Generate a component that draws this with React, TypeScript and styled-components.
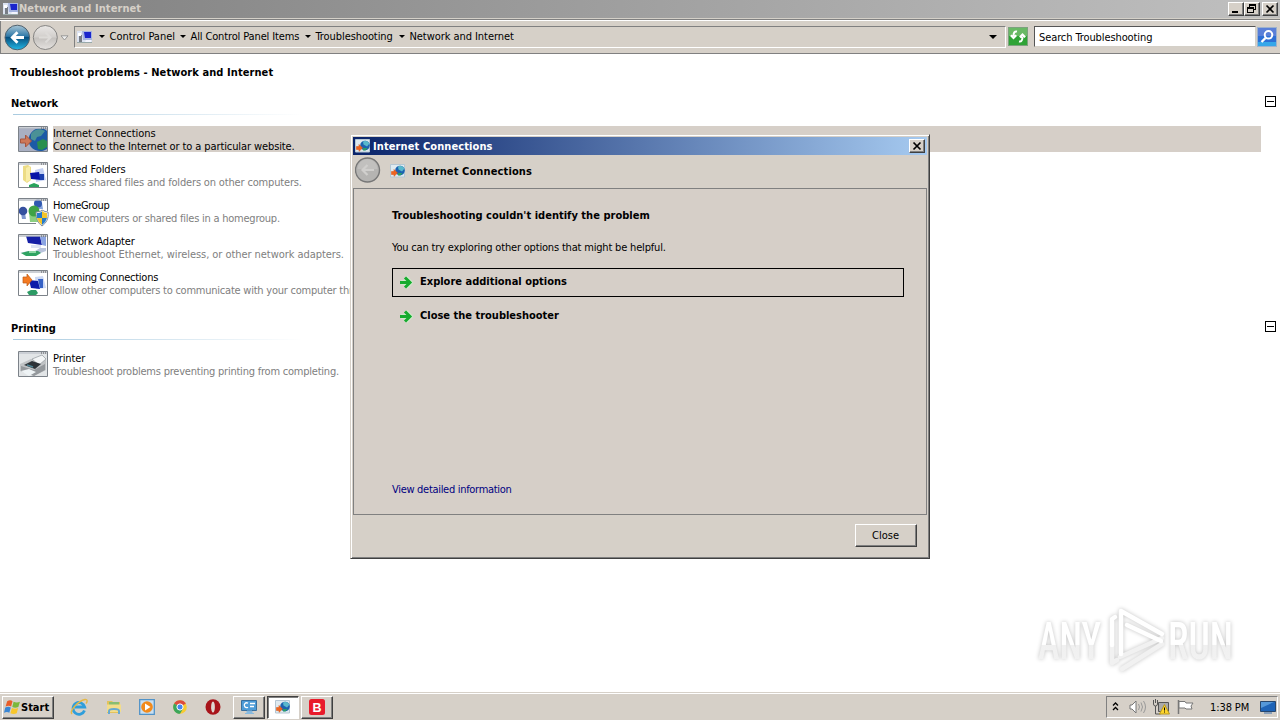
import { ReactNode } from "react";
import styled, { createGlobalStyle, css } from "styled-components";

type IconKind = "globe" | "folders" | "homegroup" | "adapter" | "incoming" | "printer";

const networkItems: { icon: IconKind; title: string; text: string; ts: number; ds: number }[] = [
  { icon: "globe", title: "Internet Connections", text: "Connect to the Internet or to a particular website.", ts: -0.05, ds: -0.1 },
  { icon: "folders", title: "Shared Folders", text: "Access shared files and folders on other computers.", ts: -0.07, ds: -0.16 },
  { icon: "homegroup", title: "HomeGroup", text: "View computers or shared files in a homegroup.", ts: -0.33, ds: -0.23 },
  { icon: "adapter", title: "Network Adapter", text: "Troubleshoot Ethernet, wireless, or other network adapters.", ts: -0.13, ds: -0.06 },
  { icon: "incoming", title: "Incoming Connections", text: "Allow other computers to communicate with your computer through", ts: -0.24, ds: -0.23 },
];

function App() {
  return (
    <Desktop>
      <GlobalStyle />
      <TitleBar>
        <ComputerIcon />
        <WindowTitle>Network and Internet</WindowTitle>
        <WindowButton>
          <svg width="14" height="12"><path d="M3 9h6" stroke="#000" strokeWidth="2" /></svg>
        </WindowButton>
        <WindowButton>
          <svg width="14" height="12" fill="none" stroke="#000" shapeRendering="crispEdges">
            <path d="M4.500 4V1.500h6v5H9M4 2.500h7M2.500 4.500h6v5h-6zM2 5.500h7" />
          </svg>
        </WindowButton>
        <WindowButton $gap>
          <CloseCross />
        </WindowButton>
      </TitleBar>
      <Toolbar>
        <BackIcon />
        <ForwardIcon />
        <HistoryArrow width="9" height="6"><path d="M1 .8h7L4.500 5z" fill="#eee" stroke="#888" strokeWidth=".8" /></HistoryArrow>
        <AddressBar>
          <ComputerIcon />
          <Crumb $w={81}>Control Panel</Crumb>
          <Crumb $w={125} $ls={-0.13}>All Control Panel Items</Crumb>
          <Crumb $w={94} $ls={-0.08}>Troubleshooting</Crumb>
          <Crumb $w={121} $ls={-0.06}>Network and Internet</Crumb>
          <AddressDrop />
        </AddressBar>
        <RefreshIcon />
        <SearchBox>Search Troubleshooting</SearchBox>
        <SearchIcon />
      </Toolbar>
      <Content>
        <PageTitle>Troubleshoot problems - Network and Internet</PageTitle>
        <Section>
          <SectionHead>
            Network
            <Collapse />
          </SectionHead>
          <Rule />
          {networkItems.map((item, i) => (
            <Row key={item.icon}>
              <ItemIcon kind={item.icon} />
              <RowText $active={i === 0}>
                <RowTitle $ls={item.ts}>{item.title}</RowTitle>
                <RowDesc $active={i === 0} $ls={item.ds}>{item.text}</RowDesc>
              </RowText>
            </Row>
          ))}
        </Section>
        <Section $second>
          <SectionHead>
            Printing
            <Collapse />
          </SectionHead>
          <Rule />
          <Row>
            <ItemIcon kind="printer" />
            <RowText>
              <RowTitle $ls={-0.1}>Printer</RowTitle>
              <RowDesc $ls={-0.22}>Troubleshoot problems preventing printing from completing.</RowDesc>
            </RowText>
          </Row>
        </Section>
      </Content>
      <Watermark />
      <Dialog>
        <DialogTitle>
          <GlobeIcon />
          <DialogName>Internet Connections</DialogName>
          <WindowButton>
            <CloseCross />
          </WindowButton>
        </DialogTitle>
        <DialogNav>
          <DisabledBack />
          <GlobeIcon />
          <NavName>Internet Connections</NavName>
        </DialogNav>
        <DialogBody>
          <DialogHeading>Troubleshooting couldn't identify the problem</DialogHeading>
          <DialogText>You can try exploring other options that might be helpful.</DialogText>
          <Command $focused><GreenArrow /><span>Explore additional options</span></Command>
          <Command><GreenArrow /><span>Close the troubleshooter</span></Command>
          <DetailLink>View detailed information</DetailLink>
        </DialogBody>
        <DialogFooter>
          <CloseButton>Close</CloseButton>
        </DialogFooter>
      </Dialog>
      <Taskbar>
        <StartButton>
          <WindowsLogo />
          <span>Start</span>
        </StartButton>
        <QuickLaunch>
          <IeIcon />
          <ExplorerIcon />
          <MediaIcon />
          <ChromeIcon />
          <OperaIcon />
        </QuickLaunch>
        <TaskButton><ControlPanelIcon /></TaskButton>
        <TaskButton $active><GlobeIcon /></TaskButton>
        <TaskButton><BIcon /></TaskButton>
        <Tray>
          <TrayIcons />
          <Clock>1:38 PM</Clock>
          <MonitorIcon />
        </Tray>
      </Taskbar>
    </Desktop>
  );
}

export default App;

// icons

const CloseCross = () => (
  <svg width="14" height="12"><path d="M3.500 2.500l7 7m0-7l-7 7" stroke="#000" strokeWidth="1.700" /></svg>
);

const ComputerIcon = () => (
  <svg width="16" height="14">
    <path d="M0 1h15v12H0z" fill="#dce3f2" />
    <path d="M5 1h10v9H6z" fill="#a5b3e0" />
    <path d="M7 2h7v6H8z" fill="#1a24cc" />
    <path d="M9 10h5v2H8z" fill="#f4f5ff" />
    <path d="M2 5h3v7H2z" fill="#777c86" />
    <path d="M1 3h3v3H1z" fill="#fff" />
    <path d="M0 12.500h15" stroke="#9aa" />
  </svg>
);

const BackIcon = () => (
  <svg width="29" height="30" viewBox="0 0 29 30">
    <defs>
      <linearGradient id="back" x2="0" y2="1">
        <stop stopColor="#a9c6d6" /><stop offset=".45" stopColor="#2f79a8" />
        <stop offset=".5" stopColor="#075080" /><stop offset="1" stopColor="#22b8e6" />
      </linearGradient>
    </defs>
    <circle cx="14.300" cy="15.500" r="12.300" fill="url(#back)" stroke="#51616d" />
    <path d="M21 15.500H10M14.500 10.300l-5.200 5.200 5.200 5.200" fill="none" stroke="#fff" strokeWidth="2.800" />
  </svg>
);

const ForwardIcon = () => (
  <svg width="26" height="30" viewBox="0 0 26 30">
    <defs>
      <linearGradient id="fwd" x2="0" y2="1">
        <stop stopColor="#e9e7e5" /><stop offset=".48" stopColor="#d2cfcc" />
        <stop offset=".52" stopColor="#c4c1be" /><stop offset="1" stopColor="#e5e2df" />
      </linearGradient>
    </defs>
    <circle cx="13.300" cy="15.500" r="12" fill="url(#fwd)" stroke="#858482" />
    <path d="M7 15.500h11M13.500 10.500l5 5-5 5" fill="none" stroke="#dddbd8" strokeWidth="2" />
  </svg>
);

const DisabledBack = () => (
  <svg width="26" height="26" viewBox="0 0 26 26">
    <circle cx="12.500" cy="13" r="12" fill="#b5b4b2" stroke="#777" strokeWidth="1.400" />
    <path d="M2.500 12a10 10 0 0 1 20 0z" fill="#c1c0be" />
    <path d="M19 13H8M12.500 8l-5 5 5 5" fill="none" stroke="#d0cfcd" strokeWidth="2.200" />
  </svg>
);

const RefreshIcon = () => (
  <svg width="20" height="19" viewBox="0 0 20 19">
    <rect x=".5" y=".5" width="19" height="18" fill="#2fa336" stroke="#7ca27e" />
    <path d="M1 1h18v8H1z" fill="#69b965" />
    <path d="M9 4.500C6.500 4 5.500 6 5.500 9M2.800 8.300L5.500 11l2.800-2.700M11 14.500c2.500.5 3.500-1.500 3.500-5M11.800 10.200l2.700-2.700 2.700 2.700" fill="none" stroke="#fff" strokeWidth="2" />
  </svg>
);

const SearchIcon = () => (
  <svg width="20" height="20" viewBox="0 0 20 20">
    <rect x=".5" y=".5" width="19" height="19" fill="#2d6fd5" stroke="#9db2cd" />
    <path d="M1 1h18v8H1z" fill="#5a7fd8" />
    <path d="M1 15h18v4H1z" fill="#36a7e9" />
    <circle cx="11.500" cy="7.800" r="3.800" fill="none" stroke="#fff" strokeWidth="2" />
    <path d="M8.500 11l-4 4" stroke="#fff" strokeWidth="2.400" />
  </svg>
);

const GlobeIcon = () => (
  <svg width="16" height="14" viewBox="0 0 16 14">
    <path d="M.5.500h14v12.500H.5z" fill="#dfeaf0" stroke="#b4c6d3" />
    <circle cx="10" cy="6.500" r="4.800" fill="#1c62b0" />
    <path d="M8 2.500q4-2 6.500 2L12 7.500 8.500 5.500z" fill="#59b8cc" />
    <path d="M8 9l4.500 0-2 2.500H8z" fill="#2b9c6b" />
    <path d="M1.500 7.500H4V5.500l3.500 3.500-3.500 3.300V10.500H1.500z" fill="#ee6420" stroke="#dd5a1c" strokeWidth=".6" />
  </svg>
);

const GreenArrow = () => (
  <svg width="15" height="16" viewBox="0 0 15 16">
    <path d="M2 7.500h9M6.500 2.500l5 5-5 5" fill="none" stroke="#cdeecb" strokeWidth="4.500" strokeLinejoin="round" />
    <path d="M1 7.500H11M6 2.500l5 5-5 5" fill="none" stroke="#16ab2e" strokeWidth="3" />
  </svg>
);

const drawings: Record<IconKind, ReactNode> = {
  globe: (
    <>
      <path d="M1 3h28v24H1z" fill="#a9afc2" />
      <path d="M29 6v18c-4 3-12 3-16-2-4-5-3-13 3-17 4-2 10-2 13 1z" fill="#1c5aa6" />
      <path d="M13 9c3-5 9-6 14-3l-4 5-4 1-2 4-4-2z" fill="#4a9196" />
      <path d="M19 17l6-3 4 2v6l-5 3-4-1z" fill="#2a8f4e" />
      <path d="M2.500 14h5v-4l6 6-6 6v-4h-5z" fill="#cd7758" stroke="#a6543e" />
    </>
  ),
  folders: (
    <>
      <path d="M5 5l5-1 3 2v13l-4 3-4-3z" fill="#ecdc86" />
      <path d="M8 7l4-2v14l-4 2z" fill="#f8eda9" />
      <path d="M17 9l8-2 3 12-10 2z" fill="#c3d0f3" />
      <path d="M12 12l9-1 2 8-10-1z" fill="#0714a8" />
      <path d="M21 13h5v6h-4z" fill="#1c3fae" />
      <path d="M11 24l5-2 5 2v3H11z" fill="#28a35d" />
    </>
  ),
  homegroup: (
    <>
      <path d="M3 16h4l1 6H4z" fill="#7f97cf" />
      <circle cx="5" cy="14" r="4.300" fill="#35509f" />
      <path d="M17 6h7l1 6h-7z" fill="#88a5dc" />
      <circle cx="20" cy="6.500" r="4" fill="#3059b0" />
      <path d="M11 15h10l1 10H12z" fill="#8acf80" />
      <circle cx="16" cy="14" r="5.500" fill="#3fa345" />
      <path d="M18 15q5 0 6-2 3 2 6 2c1 7-2 11-6 14-4-3-6-7-6-14z" fill="#fff" stroke="#7e8a99" />
      <path d="M19 16q4 0 5-2v7h-5zM24 21h5q-1 4-5 7z" fill="#277bc9" />
      <path d="M24 14q2 2 5 2v5h-5zM19 21h5v7q-4-3-5-7z" fill="#f4c52a" />
    </>
  ),
  adapter: (
    <>
      <path d="M8 3h14l2 9-14-2z" fill="#151fa6" />
      <path d="M22 3h6v10l-4-1z" fill="#8aa4e2" />
      <path d="M13 12h10v3H13z" fill="#dce3f2" />
      <path d="M2 20l8-2h7l5-3h6v3l-8 3H9z" fill="#b9c4dc" />
      <path d="M3 20l8-2h9l3 2-5 3H8z" fill="#2fa362" />
      <path d="M11 18h7v2h-7z" fill="#8ed6a6" />
    </>
  ),
  incoming: (
    <>
      <path d="M17 8l8-1 3 12-10 1z" fill="#cbd8f3" />
      <path d="M11 11l9 1 2 8-9-1z" fill="#0c1ba9" />
      <path d="M20 10h5v9h-3z" fill="#3461c6" />
      <path d="M5 8h4V5l5 6-5 6v-3H5z" fill="#f47a21" stroke="#bd5a16" strokeWidth=".7" />
      <path d="M9 23l4-2h5l2 3-2 2h-7z" fill="#2d9b65" />
    </>
  ),
  printer: (
    <>
      <path d="M1 4h28v23H1z" fill="#e2e5e7" />
      <path d="M2 14l11-5 15 1v10l-12 6-14-5z" fill="#c0c3c5" />
      <path d="M14 9l10-4 4 4-7 6z" fill="#f3f5f6" stroke="#92989d" strokeWidth=".7" />
      <path d="M6 15l8-4 9 3-6 5z" fill="#2e3338" />
      <path d="M3 16l13 4 11-6v6l-11 6-13-5z" fill="#94989c" />
      <path d="M3 21l8-2 7 3-7 4z" fill="#eef3f5" />
      <path d="M9 15l6 2" stroke="#4f8494" strokeWidth="1.500" />
    </>
  ),
};

const ItemIcon = ({ kind }: { kind: IconKind }) => (
  <svg width="31" height="30" viewBox="0 0 31 30">
    <path d="M.5 1.500h29v25H.5z" fill="#fff" />
    {drawings[kind]}
    <path d="M1 2h28v2H1z" fill="#b5bac3" opacity=".7" />
    <path d="M23 3h1m1 0h1m1 0h1" stroke="#555" />
    <path
      d={kind === "homegroup" ? "M18 26.500H.5v-25h29V14" : "M.5 1.500h29v25H.5z"}
      fill="none"
      stroke="#7c8289"
    />
  </svg>
);

const Collapse = () => (
  <CollapseBox width="11" height="11" shapeRendering="crispEdges">
    <path d="M.5.500h10v10H.5zM2 5.500h7" fill="none" stroke="#000" />
  </CollapseBox>
);

const WindowsLogo = () => (
  <svg width="17" height="17" viewBox="0 0 16 16">
    <path d="M3 2q3-1.500 5 0L6.700 7Q4.500 5.600 1.500 7z" fill="#e95d29" />
    <path d="M9 2.500q3 1.500 6 0L13.500 7.500q-3 1.300-5.700 0z" fill="#7bb83b" />
    <path d="M1.200 8q3-1.400 5.200 0L5 13Q3 11.500 0 13z" fill="#3a86d4" />
    <path d="M7.500 8.500q3 1.400 5.800 0L12 13.500q-3 1.300-6 0z" fill="#f8c62b" />
  </svg>
);

const IeIcon = () => (
  <svg width="18" height="18" viewBox="0 0 18 18">
    <path d="M14.500 12.500A5.900 5.900 0 1 1 14.700 9H5" fill="none" stroke="#2f9edb" strokeWidth="2.800" />
    <path d="M2 16C-1 13 8 3 15 1.500c3-.4 2.300 2.500 1 4" fill="none" stroke="#e5b845" strokeWidth="1.400" />
  </svg>
);

const ExplorerIcon = () => (
  <svg width="16" height="16" viewBox="0 0 16 16">
    <path d="M1 2h5l1 1h7v11H1z" fill="#e3c25c" />
    <path d="M3 3h10v3H3z" fill="#88bd71" />
    <path d="M1 5.500h14V13H1z" fill="#f3dd8a" />
    <path d="M3 15v-3q0-2 5-2t5 2v3" fill="none" stroke="#66a9d1" strokeWidth="2" />
  </svg>
);

const MediaIcon = () => (
  <svg width="16" height="16" viewBox="0 0 16 16">
    <path d="M.7.700h14.600v14.600H.7z" fill="#c9dff1" stroke="#5193c8" strokeWidth="1.300" />
    <circle cx="8" cy="8" r="5.800" fill="#f28a1b" />
    <path d="M6 4.500L11.500 8 6 11.500z" fill="#fff" />
  </svg>
);

const ChromeIcon = () => (
  <svg width="14" height="14" viewBox="0 0 14 14">
    <circle cx="7" cy="7" r="6.800" fill="#f8cb31" />
    <path d="M7 7L1.100 3.600A6.800 6.800 0 0 1 12.900 3.600z" fill="#dc4b3e" />
    <path d="M7 7L1.100 3.600A6.800 6.800 0 0 0 7 13.800l3-5z" fill="#3ca65b" />
    <circle cx="7" cy="7" r="3.100" fill="#4587ef" stroke="#fff" />
  </svg>
);

const OperaIcon = () => (
  <svg width="16" height="16" viewBox="0 0 16 16">
    <ellipse cx="8" cy="8" rx="7.500" ry="7.700" fill="#a8141a" />
    <ellipse cx="8" cy="8" rx="1.900" ry="5.600" fill="#ded6d0" />
  </svg>
);

const ControlPanelIcon = () => (
  <svg width="16" height="16" viewBox="0 0 16 16">
    <path d="M.5 1.500h15v10H.5z" fill="#4d9bd7" stroke="#386f9e" />
    <path d="M7 4.200a2.400 2.400 0 1 0 0 4M9 4.500h5M9 7.500h4" fill="none" stroke="#fff" strokeWidth="1.300" />
    <path d="M6 12h5v2H6zM4 14.500h9" fill="#87b9df" stroke="#87b9df" />
  </svg>
);

const BIcon = () => (
  <svg width="16" height="16" viewBox="0 0 16 16">
    <rect width="16" height="16" rx="2.500" fill="#e91b2b" />
    <text x="8" y="12.500" fontSize="12.500" fontWeight="700" fontFamily="Liberation Sans, sans-serif" textAnchor="middle" fill="#fff">B</text>
  </svg>
);

const TrayIcons = () => (
  <svg width="92" height="18" viewBox="0 0 92 18" fill="none">
    <path d="M5 7.500L7.500 5 10 7.500M5 12l2.500-2.500L10 12" stroke="#000" strokeWidth="1.300" />
    <path d="M22 7h2l4-4v12l-4-4h-2z" fill="#fff" stroke="#777" />
    <path d="M30.500 6q2 3 0 6M33 4.500q3 4.500 0 9M35.500 3q4 6 0 12" stroke="#999" />
    <path d="M50.500 4.500h10v9h-10z" fill="#aaa" stroke="#555" />
    <path d="M45.500 2v4q0 2 2 2t2-2V2M47.500 1v4M47.500 8v8h5" stroke="#555" />
    <path d="M56.500 6.500l5 9.500h-10z" fill="#ffd52b" stroke="#b89820" />
    <path d="M56.500 9.500v3m0 1v1" stroke="#000" />
    <path d="M70.500 2v14" stroke="#777" strokeWidth="1.500" />
    <path d="M71 3.500h6l1 1.500h7l-2 3 1 3h-6l-1-1h-6z" fill="#fff" stroke="#777" />
  </svg>
);

const MonitorIcon = () => (
  <svg width="16" height="16" viewBox="0 0 16 16">
    <path d="M.5 2.500h15v10H.5z" fill="#1f64b7" stroke="#28476d" />
    <path d="M1 3h13L1 9z" fill="#5598d9" />
    <path d="M4 14h8" stroke="#6f8fb4" strokeWidth="1.500" />
  </svg>
);

const Watermark = () => (
  <WatermarkSvg width="210" height="76" viewBox="0 0 210 76">
    <defs>
      <linearGradient id="mark" x2="0" y2="1">
        <stop stopColor="#fff" /><stop offset=".55" stopColor="#fff" />
        <stop offset=".56" stopColor="#f0f0f0" /><stop offset="1" stopColor="#f3f3f3" />
      </linearGradient>
    </defs>
    <g fill="url(#mark)" fontFamily="Roboto, sans-serif" fontSize="51" fontWeight="500">
      <text x="8" y="55" textLength="63" lengthAdjust="spacingAndGlyphs">ANY</text>
      <text x="138" y="55" textLength="65" lengthAdjust="spacingAndGlyphs">RUN</text>
    </g>
    <g fill="none" strokeWidth="4.500" strokeLinejoin="round" strokeLinecap="round">
      <path d="M90 53l42-19M82 40v19l5-3M92 65l40-25" stroke="#f1f1f1" />
      <path d="M91 50V7l41 23M82 41V15l3-2M97 21l34 16" stroke="#fff" />
    </g>
  </WatermarkSvg>
);

// styles

const GlobalStyle = createGlobalStyle`
  body {
    margin: 0;
    overflow: hidden;
    font-family: "DejaVu Sans Condensed", "DejaVu Sans", sans-serif;
    font-stretch: condensed;
    font-size: 11px;
    line-height: 13px;
    color: #000;
  }

  * {
    box-sizing: border-box;
  }

  svg {
    display: block;
    flex-shrink: 0;
  }
`;

const raised = css`
  background: #d6d0c8;
  border: 1px solid;
  border-color: #fff #404040 #404040 #fff;
  box-shadow: inset -1px -1px #808080;
`;

const Desktop = styled.div`
  position: relative;
  width: 1280px;
  height: 720px;
  display: flex;
  flex-direction: column;
  overflow: hidden;
  background: #fff;
  white-space: nowrap;
`;

const TitleBar = styled.div`
  height: 19px;
  display: flex;
  align-items: center;
  padding: 0 2px 1px 3px;
  background: linear-gradient(90deg, #808080, #c0c0c0);
  border-bottom: 1px solid #d4d0c8;
`;

const WindowTitle = styled.div`
  flex: 1;
  font-weight: 700;
  letter-spacing: 0.09px;
  color: #d6d0c8;
`;

const WindowButton = styled.button<{ $gap?: boolean }>`
  ${raised}
  width: 16px;
  height: 14px;
  display: flex;
  align-items: center;
  justify-content: center;
  padding: 0;
  overflow: hidden;
  margin-left: ${(p) => (p.$gap ? 2 : 0)}px;
`;

const Toolbar = styled.div`
  height: 35px;
  display: flex;
  align-items: center;
  padding: 0 3px;
  background: #d6d0c8;
  border-top: 1px solid #808080;
  border-bottom: 1px solid #808080;
  box-shadow: inset 0 1px #fff, inset 1px 0 #808080;
`;

const HistoryArrow = styled.svg`
  margin: 2px 0 0 2px;
`;

const AddressBar = styled.div`
  width: 932px;
  height: 22px;
  margin: 0 2px 0 5px;
  display: flex;
  align-items: center;
  padding-left: 2px;
  border: 1px solid;
  border-color: #808080 #fff #fff #808080;

  > svg {
    margin-right: 5.5px;
  }
`;

const Crumb = styled.div<{ $w: number; $ls?: number }>`
  display: flex;
  align-items: center;
  width: ${(p) => p.$w}px;
  letter-spacing: ${(p) => p.$ls || 0}px;

  &::before {
    content: "";
    flex-shrink: 0;
    border: 3px solid transparent;
    border-top-color: #000;
    border-bottom: 0;
    margin-right: 5px;
  }
`;

const AddressDrop = styled.div`
  margin: 1px 8px 0 auto;
  border: 4px solid transparent;
  border-top-color: #000;
  border-bottom: 0;
`;

const SearchBox = styled.div`
  flex: 1;
  height: 21px;
  margin: 0 1px 0 6px;
  padding: 4px 4px 2px;
  letter-spacing: -0.1px;
  background: #fff;
  border: 1px solid;
  border-color: #555 #d4d0c8 #d4d0c8 #555;
`;

const Content = styled.main`
  height: 638px;
  padding: 12px 4px 0 10px;
`;

const PageTitle = styled.h1`
  margin: 0;
  font-size: 11px;
  line-height: 13px;
  letter-spacing: 0.08px;
`;

const Section = styled.section<{ $second?: boolean }>`
  padding-top: ${(p) => (p.$second ? 16 : 18)}px;
`;

const SectionHead = styled.h2`
  display: flex;
  justify-content: space-between;
  margin: 0;
  padding-left: 1px;
  font-size: 11px;
  line-height: 13px;
`;

const CollapseBox = styled.svg`
  margin-top: -1px;
`;

const Rule = styled.div`
  width: 290px;
  height: 1px;
  margin: 4px 0 11px 3px;
  background: linear-gradient(90deg, #a9cbe0, #fff);
`;

const Row = styled.div`
  height: 36px;
  display: flex;
  padding-left: 8px;

  > svg {
    margin-top: -1px;
  }
`;

const RowText = styled.div<{ $active?: boolean }>`
  width: 1208px;
  height: 26px;
  margin-left: 4px;
  padding-top: 1px;
  background: ${(p) => (p.$active ? "#d6cfc8" : "none")};
`;

const RowTitle = styled.div<{ $ls: number }>`
  letter-spacing: ${(p) => p.$ls}px;
`;

const RowDesc = styled.div<{ $active?: boolean; $ls: number }>`
  letter-spacing: ${(p) => p.$ls}px;
  color: ${(p) => (p.$active ? "#000" : "#808080")};
`;

const WatermarkSvg = styled.svg`
  position: absolute;
  left: 1030px;
  top: 604px;
  overflow: visible;
  filter: drop-shadow(0 0 2px rgba(0, 0, 0, 0.24));
`;

const Dialog = styled.div`
  position: absolute;
  left: 350px;
  top: 134px;
  width: 580px;
  height: 425px;
  display: flex;
  flex-direction: column;
  padding: 1px 2px 2px 1px;
  background: #d6d0c8;
  border: 1px solid;
  border-color: #d6d0c8 #404040 #404040 #d6d0c8;
  box-shadow: inset 1px 1px #fff, inset -1px -1px #808080;
`;

const DialogTitle = styled.div`
  height: 18px;
  margin: 1px 0 0 1px;
  display: flex;
  align-items: center;
  padding: 0 2px;
  background: linear-gradient(90deg, #0a246a, #a6caf0);
`;

const DialogName = styled.div`
  flex: 1;
  padding-left: 2px;
  font-weight: 700;
  letter-spacing: 0.1px;
  color: #fff;
`;

const DialogNav = styled.div`
  height: 33px;
  display: flex;
  align-items: center;
  padding: 0 0 3px 3px;

  > svg + svg {
    margin: 1px 0 0 9px;
  }
`;

const NavName = styled.div`
  margin: 2px 0 0 6px;
  font-weight: 700;
  letter-spacing: 0.12px;
`;

const DialogBody = styled.div`
  height: 327px;
  display: flex;
  flex-direction: column;
  align-items: flex-start;
  margin-left: 1px;
  padding: 20px 22px 0 38px;
  background: #d6cfc8;
  border: 1px solid #808080;
`;

const DialogHeading = styled.div`
  font-weight: 700;
  letter-spacing: 0.02px;
`;

const DialogText = styled.div`
  margin: 19px 0 14px;
  letter-spacing: -0.18px;
`;

const Command = styled.div<{ $focused?: boolean }>`
  width: 512px;
  height: 29px;
  margin-bottom: 5px;
  display: flex;
  padding: 6px 0 0 6px;
  font-weight: 700;
  border: 1px solid ${(p) => (p.$focused ? "#000" : "transparent")};

  span {
    margin-left: 6px;
  }
`;

const DetailLink = styled.a`
  margin-top: 147px;
  letter-spacing: -0.3px;
  color: #000080;
`;

const DialogFooter = styled.div`
  display: flex;
  justify-content: flex-end;
  padding: 9px 10px 0 0;
`;

const CloseButton = styled.button`
  ${raised}
  width: 62px;
  height: 23px;
  padding: 0 1px 1px 0;
  font: inherit;
`;

const Taskbar = styled.div`
  height: 28px;
  display: flex;
  padding: 3px 2px 1px;
  background: #d6d0c8;
  border-top: 1px solid #d6d0c8;
  box-shadow: inset 0 1px #fff;
`;

const StartButton = styled.button`
  ${raised}
  width: 52px;
  height: 23px;
  display: flex;
  align-items: center;
  padding: 0 0 0 1px;
  font: inherit;
  font-weight: 700;
`;

const QuickLaunch = styled.div`
  width: 179px;
  display: flex;
  align-items: center;
  gap: 17.7px;
  padding: 0 0 1px 16px;
`;

const TaskButton = styled.button<{ $active?: boolean }>`
  ${raised}
  width: 32px;
  height: 23px;
  display: flex;
  align-items: center;
  justify-content: center;
  padding: 0 0 1px;
  margin-right: 2px;
  ${(p) =>
    p.$active &&
    css`
      background: #fff;
      border-color: #404040 #fff #fff #404040;
      box-shadow: inset 1px 1px #808080;
    `}
`;

const Tray = styled.div`
  width: 172px;
  height: 22px;
  display: flex;
  align-items: center;
  margin-left: auto;
  padding-left: 1px;
  border: 1px solid;
  border-color: #808080 #fff #fff #808080;
`;

const Clock = styled.div`
  width: 60px;
  padding-left: 10px;
  letter-spacing: -0.1px;
`;
